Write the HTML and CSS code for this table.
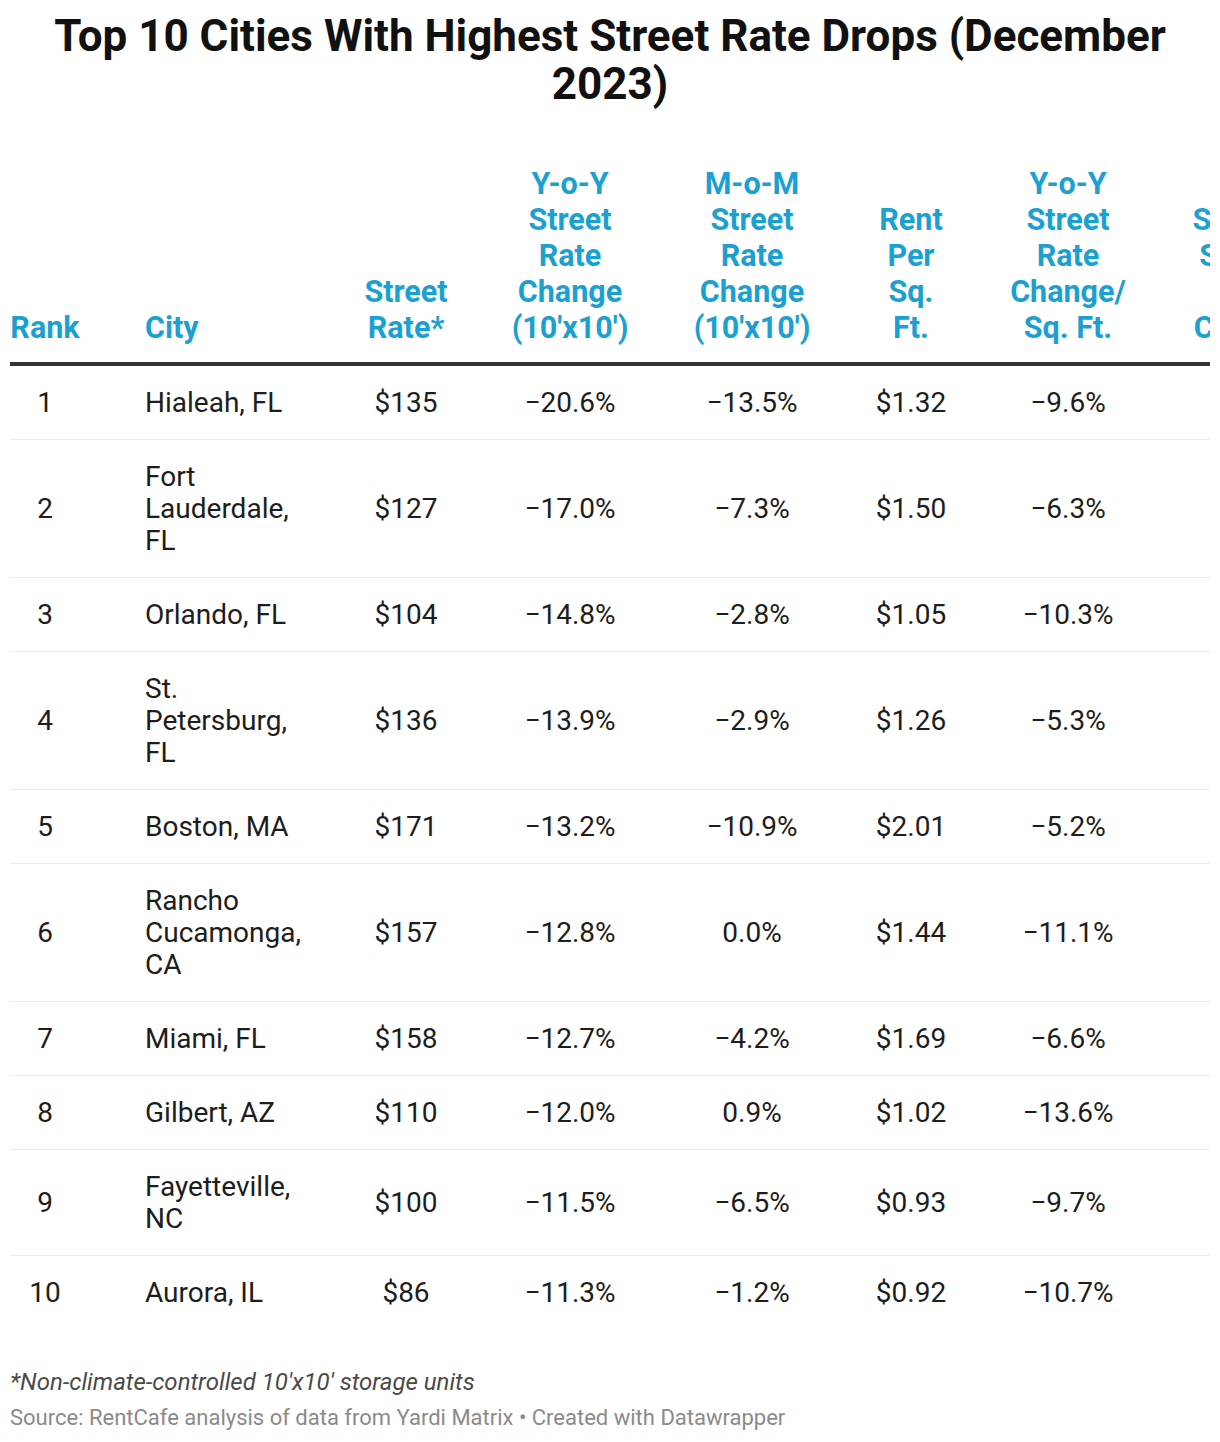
FILE: index.html
```html
<!DOCTYPE html>
<html lang="en">
<head>
<meta charset="utf-8">
<title>Top 10 Cities With Highest Street Rate Drops (December 2023)</title>
<link rel="stylesheet" href="styles.css">
</head>
<body>
<div class="chart">
  <h1 class="title">Top 10 Cities With Highest Street Rate Drops (December 2023)</h1>
  <div class="table-wrap">
    <table class="data">
      <colgroup>
        <col class="c-rank"><col class="c-city"><col class="c-rate"><col class="c-yoy"><col class="c-mom"><col class="c-rent"><col class="c-yoysq"><col class="c-extra">
      </colgroup>
      <thead>
        <tr>
          <th class="rank">Rank</th>
          <th class="city">City</th>
          <th class="num p-rate">Street Rate*</th>
          <th class="num p-yoy">Y-o-Y Street Rate Change (10'x10')</th>
          <th class="num p-mom">M-o-M Street Rate Change (10'x10')</th>
          <th class="num p-rent">Rent Per Sq. Ft.</th>
          <th class="num p-yoysq">Y-o-Y Street Rate Change/ Sq. Ft.</th>
          <th class="num p-extra">New Storage Supply as % Change</th>
        </tr>
      </thead>
      <tbody>
        <tr><td class="rank">1</td><td class="city">Hialeah, FL</td><td class="num">$135</td><td class="num">−20.6%</td><td class="num">−13.5%</td><td class="num">$1.32</td><td class="num">−9.6%</td><td class="num"></td></tr>
        <tr><td class="rank">2</td><td class="city">Fort Lauderdale, FL</td><td class="num">$127</td><td class="num">−17.0%</td><td class="num">−7.3%</td><td class="num">$1.50</td><td class="num">−6.3%</td><td class="num"></td></tr>
        <tr><td class="rank">3</td><td class="city">Orlando, FL</td><td class="num">$104</td><td class="num">−14.8%</td><td class="num">−2.8%</td><td class="num">$1.05</td><td class="num">−10.3%</td><td class="num"></td></tr>
        <tr><td class="rank">4</td><td class="city">St. Petersburg, FL</td><td class="num">$136</td><td class="num">−13.9%</td><td class="num">−2.9%</td><td class="num">$1.26</td><td class="num">−5.3%</td><td class="num"></td></tr>
        <tr><td class="rank">5</td><td class="city">Boston, MA</td><td class="num">$171</td><td class="num">−13.2%</td><td class="num">−10.9%</td><td class="num">$2.01</td><td class="num">−5.2%</td><td class="num"></td></tr>
        <tr><td class="rank">6</td><td class="city">Rancho Cucamonga, CA</td><td class="num">$157</td><td class="num">−12.8%</td><td class="num">0.0%</td><td class="num">$1.44</td><td class="num">−11.1%</td><td class="num"></td></tr>
        <tr><td class="rank">7</td><td class="city">Miami, FL</td><td class="num">$158</td><td class="num">−12.7%</td><td class="num">−4.2%</td><td class="num">$1.69</td><td class="num">−6.6%</td><td class="num"></td></tr>
        <tr><td class="rank">8</td><td class="city">Gilbert, AZ</td><td class="num">$110</td><td class="num">−12.0%</td><td class="num">0.9%</td><td class="num">$1.02</td><td class="num">−13.6%</td><td class="num"></td></tr>
        <tr><td class="rank">9</td><td class="city">Fayetteville, NC</td><td class="num">$100</td><td class="num">−11.5%</td><td class="num">−6.5%</td><td class="num">$0.93</td><td class="num">−9.7%</td><td class="num"></td></tr>
        <tr><td class="rank">10</td><td class="city">Aurora, IL</td><td class="num">$86</td><td class="num">−11.3%</td><td class="num">−1.2%</td><td class="num">$0.92</td><td class="num">−10.7%</td><td class="num"></td></tr>
      </tbody>
    </table>
  </div>
  <p class="notes">*Non-climate-controlled 10'x10' storage units</p>
  <p class="source">Source: RentCafe analysis of data from Yardi Matrix • Created with Datawrapper</p>
</div>
</body>
</html>
```

FILE: styles.css
```css
html, body {
  margin: 0;
  padding: 0;
  background: #ffffff;
}

body {
  font-family: Roboto, "Liberation Sans", Arial, sans-serif;
  color: #1d1d1d;
}

.chart {
  width: 1220px;
  overflow: hidden;
}

.title {
  margin: 12px 30px 0;
  font-size: 44px;
  line-height: 48px;
  font-weight: 700;
  text-align: center;
  color: #111111;
}

.table-wrap {
  margin: 58px 10px 0;
  width: 1200px;
  overflow: hidden;
}

.data {
  border-collapse: collapse;
  table-layout: fixed;
  width: 1322px;
}

.c-rank { width: 125px; }
.c-city { width: 195px; }
.c-rate { width: 152px; }
.c-yoy { width: 176px; }
.c-mom { width: 188px; }
.c-rent { width: 130px; }
.c-yoysq { width: 184px; }
.c-extra { width: 172px; }

.data th {
  font-size: 30.5px;
  line-height: 36px;
  font-weight: 700;
  color: #1ba1d1;
  vertical-align: bottom;
  padding: 0 0 16px;
  border-bottom: 4px solid #333333;
}

.data td {
  font-size: 28px;
  line-height: 32px;
  padding: 20.5px 0;
  vertical-align: middle;
  border-bottom: 1px solid #ebebeb;
}

.data tbody tr:last-child td {
  border-bottom: none;
}

.rank {
  text-align: center;
  padding-right: 55px !important;
}

.city {
  text-align: left;
  padding-left: 10px !important;
  padding-right: 20px !important;
}

.num {
  text-align: center;
}

.data td.num {
  padding-left: 4px;
  padding-right: 4px;
}

.data th.p-rate { padding-left: 8px; padding-right: 8px; }
.data th.p-yoy { padding-left: 23px; padding-right: 23px; }
.data th.p-mom { padding-left: 29px; padding-right: 29px; }
.data th.p-rent { padding-left: 30px; padding-right: 30px; }
.data th.p-yoysq { padding-left: 27px; padding-right: 27px; }
.data th.p-extra { padding-left: 20px; padding-right: 20px; }

.notes {
  margin: 37px 10px 0;
  font-size: 24px;
  line-height: 32px;
  font-style: italic;
  color: #4a4a4a;
}

.source {
  margin: 6px 10px 0;
  font-size: 22px;
  line-height: 28px;
  color: #8a8a8a;
}
```
